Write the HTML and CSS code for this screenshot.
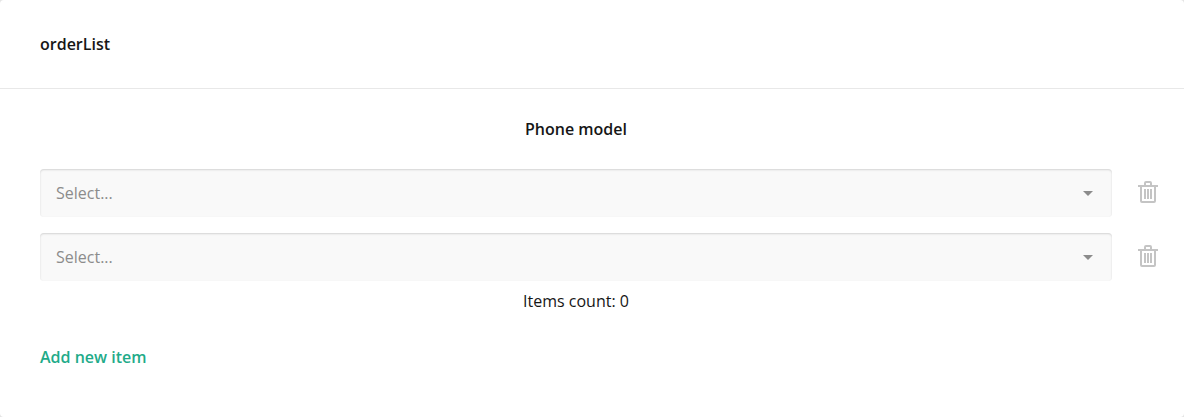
FILE: index.html
```html
<!DOCTYPE html>
<html lang="en">
<head>
<meta charset="utf-8">
<title>orderList</title>
<link rel="stylesheet" href="styles.css">
</head>
<body>
<main class="card">
  <header class="card-header">orderList</header>
  <section class="card-body">
    <div class="column-title">Phone model</div>
    <div class="row">
      <div class="select"><span>Select...</span><i class="arrow"></i></div>
      <svg class="trash" viewBox="0 0 20 24"><path d="M0 5h20M7 5V2q0-1 1-1h4q1 0 1 1v3M3 5v15q0 1 1 1h12q1 0 1-1V5M7 8v10M10 8v10M13 8v10"/></svg>
    </div>
    <div class="row">
      <div class="select"><span>Select...</span><i class="arrow"></i></div>
      <svg class="trash" viewBox="0 0 20 24"><path d="M0 5h20M7 5V2q0-1 1-1h4q1 0 1 1v3M3 5v15q0 1 1 1h12q1 0 1-1V5M7 8v10M10 8v10M13 8v10"/></svg>
    </div>
    <div class="count">Items count: 0</div>
    <a class="add">Add new item</a>
  </section>
</main>
</body>
</html>
```
FILE: styles.css
```css
* { box-sizing: border-box; }
body { margin: 0; background: #e4e4e4; font: 16px/24px "Open Sans", sans-serif; color: #161616; }
.card { height: 417px; background: #fff; border-radius: 4px; overflow: hidden; }
.card-header { height: 89px; padding: 32px 40px; border-bottom: 1px solid #e8e8e8; font-weight: 600; }
.card-body { padding: 28px 26px 0 40px; }
.column-title { width: 1072px; margin-bottom: 28px; text-align: center; font-weight: 600; }
.row { display: flex; align-items: center; justify-content: space-between; margin-bottom: 16px; }
.select { display: flex; align-items: center; justify-content: space-between; width: 1072px; height: 48px; padding: 0 19px 0 16px; background: #f9f9f9; box-shadow: inset 0 1px 2px rgba(0, 0, 0, 0.15); border-radius: 4px; color: #8c8c8c; }
.arrow { border: 5px solid transparent; border-top-color: #8c8c8c; border-bottom: 0; }
.trash { width: 20px; height: 24px; fill: none; stroke: #c4c4c4; stroke-width: 2; }
.count { width: 1072px; margin-top: -8px; text-align: center; font-weight: 400; }
.add { display: inline-block; margin-top: 32px; color: #1fab89; font-weight: 600; }
```
